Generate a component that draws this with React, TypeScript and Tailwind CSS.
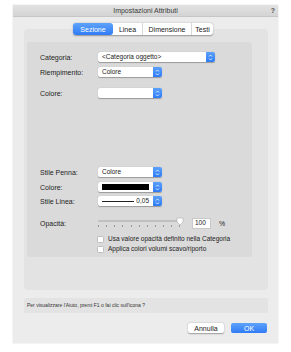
import React from 'react';

const font = { fontFamily: '"Liberation Sans", Arial, sans-serif' };

function Arrows() {
  return (
    <span className="flex w-[9px] h-full items-center justify-center rounded-r-[2px] bg-gradient-to-b from-[#5aa0fa] to-[#2f7bf5]">
      <svg width="5" height="7" viewBox="0 0 5 7">
        <path d="M1 2.5 L2.5 1 L4 2.5" stroke="white" strokeWidth="0.8" fill="none" />
        <path d="M1 4.5 L2.5 6 L4 4.5" stroke="white" strokeWidth="0.8" fill="none" />
      </svg>
    </span>
  );
}

function Select({ w, children }: { w: string; children?: React.ReactNode }) {
  return (
    <div className={`flex h-[10px] items-stretch rounded-[2px] bg-white shadow-[0_0.5px_1px_rgba(0,0,0,0.3)] ${w}`}>
      <div className="flex flex-1 items-center px-[4px] text-[6.5px] text-[#222] leading-none">{children}</div>
      <Arrows />
    </div>
  );
}

function Row({ label, mt, children }: { label: string; mt: string; children: React.ReactNode }) {
  return (
    <div className={`flex items-center ${mt}`}>
      <span className="w-[71px] pl-[13px] text-[7px] text-[#222] leading-none">{label}</span>
      {children}
    </div>
  );
}

function Check({ label, mt }: { label: string; mt: string }) {
  return (
    <div className={`flex items-center pl-[70px] ${mt}`}>
      <span className="w-[7px] h-[7px] rounded-[1.5px] bg-white border border-[#bdbdbd]" />
      <span className="ml-[4px] text-[6.5px] text-[#222] leading-none">{label}</span>
    </div>
  );
}

export default function App() {
  const tabs = ['Sezione', 'Linea', 'Dimensione', 'Testi'];
  return (
    <div className="w-[291px] h-[352px] bg-white pt-[5px] pl-[13px]" style={font}>
      <div className="w-[265px] h-[338px] bg-[#ececec] flex flex-col shadow-[0_0_1px_rgba(0,0,0,0.25)]">
        {/* Title bar */}
        <div className="relative h-[12px] flex items-center justify-center bg-gradient-to-b from-[#e2e2e2] to-[#d4d4d4] border-b border-[#c6c6c6]">
          <span className="text-[7px] text-[#3a3a3a] leading-none">Impostazioni Attributi</span>
          <span className="absolute right-[3px] top-[2px] text-[7px] font-bold text-[#555] leading-none">?</span>
        </div>

        {/* Tabs */}
        <div className="relative z-10 mt-[6px] flex pl-[60px]">
          <div className="flex h-[12px] rounded-[3px] bg-white shadow-[0_0.5px_1.5px_rgba(0,0,0,0.35)]">
            {tabs.map((t, i) => (
              <div
                key={t}
                className={
                  i === 0
                    ? 'flex items-center justify-center w-[40px] rounded-[3px] bg-gradient-to-b from-[#5ea2fa] to-[#2f7bf5] text-white text-[7px] leading-none'
                    : `flex items-center justify-center text-[7px] text-[#222] leading-none ${i === 1 ? 'w-[29px]' : i === 2 ? 'w-[50px] border-l border-r border-[#d8d8d8]' : 'w-[21px]'}`
                }
              >
                {t}
              </div>
            ))}
          </div>
        </div>

        {/* Outer group */}
        <div className="ml-[11px] mt-[-6px] w-[244px] h-[261px] rounded-[4px] bg-[#e3e3e3] pt-[13px] pl-[3px]">
          <div className="w-[225px] h-[215px] rounded-[3px] bg-[#dadada] pt-[10px]">
            <Row label="Categoria:" mt="mt-0">
              <Select w="w-[117px]">&lt;Categoria oggetto&gt;</Select>
            </Row>
            <Row label="Riempimento:" mt="mt-[5px]">
              <Select w="w-[64px]">Colore</Select>
            </Row>
            <Row label="Colore:" mt="mt-[11px]">
              <Select w="w-[64px]" />
            </Row>

            <Row label="Stile Penna:" mt="mt-[69px]">
              <Select w="w-[64px]">Colore</Select>
            </Row>
            <Row label="Colore:" mt="mt-[5px]">
              <Select w="w-[64px]">
                <span className="block w-full h-[6px] bg-black" />
              </Select>
            </Row>
            <Row label="Stile Linea:" mt="mt-[4px]">
              <Select w="w-[64px]">
                <span className="flex-1 h-[0.8px] bg-[#222]" />
                <span className="ml-[2px] text-[6.5px]">0,05</span>
              </Select>
            </Row>

            <div className="flex items-center mt-[11px]">
              <span className="w-[71px] pl-[13px] text-[7px] text-[#222] leading-none">Opacità:</span>
              <div className="relative w-[86px] h-[12px]">
                <div className="absolute left-0 right-[4px] top-[3px] h-[1.5px] rounded bg-[#bfbfbf]" />
                <div className="absolute left-0 right-[4px] top-[8px] flex justify-between">
                  {Array.from({ length: 11 }).map((_, i) => (
                    <span key={i} className="w-[0.7px] h-[2px] bg-[#9a9a9a]" />
                  ))}
                </div>
                <svg className="absolute right-0 top-[0px]" width="8" height="9" viewBox="0 0 8 9">
                  <path d="M1 1 H7 V5 L4 8 L1 5 Z" fill="white" stroke="#b0b0b0" strokeWidth="0.6" />
                </svg>
              </div>
              <div className="ml-[8px] w-[19px] h-[11px] bg-white border border-[#c8c8c8] flex items-center px-[2px] text-[6.5px] text-[#222] leading-none">100</div>
              <span className="ml-[8px] text-[7px] text-[#222] leading-none">%</span>
            </div>

            <Check label="Usa valore opacità definito nella Categoria" mt="mt-[7px]" />
            <Check label="Applica colori volumi scavo/riporto" mt="mt-[3px]" />
          </div>
        </div>

        {/* Help line */}
        <div className="ml-[11px] mt-[8px] w-[244px] h-[15px] rounded-[2px] bg-[#e3e3e3] flex items-center pl-[3px]">
          <span className="text-[5px] text-[#333] leading-none">Per visualizzare l'Aiuto, premi F1 o fai clic sull'icona ?</span>
        </div>

        {/* Buttons */}
        <div className="mt-[10px] flex justify-end pr-[11px] gap-[7px]">
          <div className="w-[36px] h-[10px] rounded-[2px] bg-white shadow-[0_0.5px_1.5px_rgba(0,0,0,0.35)] flex items-center justify-center text-[7px] text-[#222] leading-none">Annulla</div>
          <div className="w-[36px] h-[10px] rounded-[2px] bg-gradient-to-b from-[#5ea2fa] to-[#2f7bf5] flex items-center justify-center text-[7px] text-white leading-none">OK</div>
        </div>
      </div>
    </div>
  );
}
